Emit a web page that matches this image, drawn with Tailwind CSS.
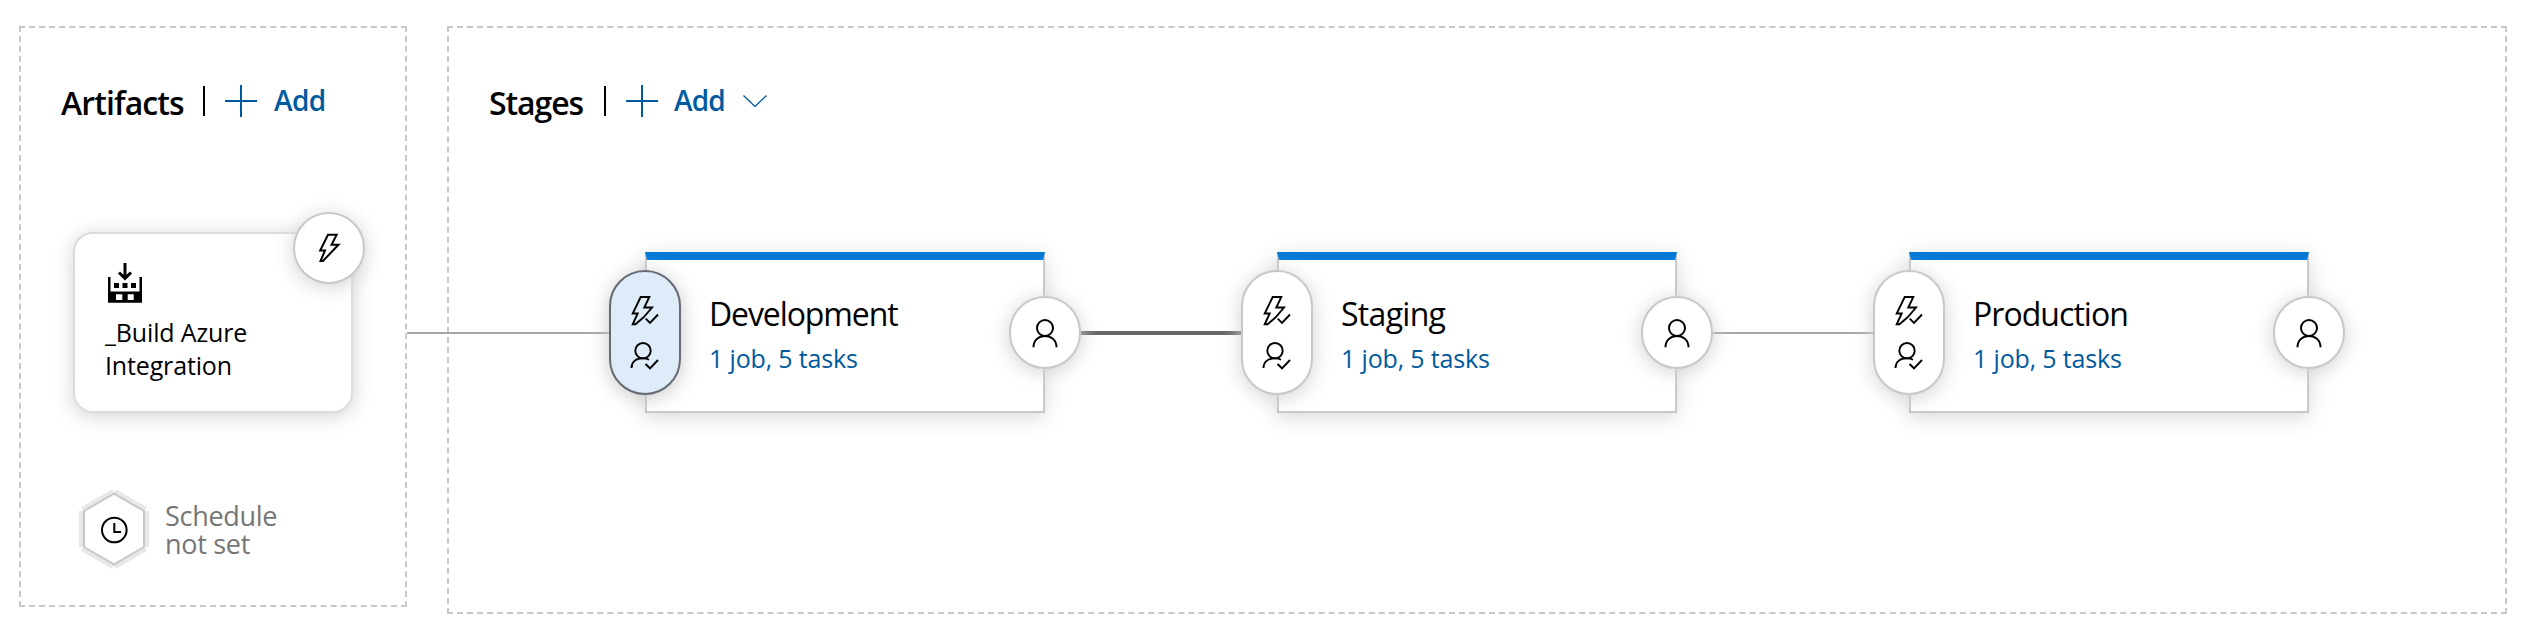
<!DOCTYPE html>
<html lang="en">
<head>
<meta charset="utf-8">
<title>Release pipeline</title>
<script src="https://cdn.jsdelivr.net/npm/@tailwindcss/browser@4"></script>
</head>
<body class="bg-white text-black font-['Open_Sans','Noto_Sans',sans-serif]">
<svg class="hidden">
  <symbol id="plus" viewBox="0 0 32 32"><path d="M0 16H32M16 0V32" fill="none" stroke="currentColor" stroke-width="2"/></symbol>
  <symbol id="person" viewBox="0 0 72 73"><g fill="none" stroke="#000" stroke-width="2"><circle cx="36" cy="32" r="8"/><path d="M24.5 51.3C24.5 44.5 29.2 40 36 40S47.500 44.500 47.500 51.300"/></g></symbol>
  <symbol id="gates" viewBox="0 0 72 125"><g fill="none" stroke="#000" stroke-width="1.9"><path d="M35.500 46.500L26.500 54.300H23.700L28.700 43.500H23.700L31.700 27H40.300L35.300 37.500H43L34.500 47.500"/><path d="M36.700 48.700L41 53L49 44.500"/><circle cx="34" cy="80.700" r="7.700"/><path d="M22.500 98C22.500 92 27 88.300 34 88.300C36.500 88.300 38.500 88.900 40 89.800"/><path d="M36.500 94L41 98.300L49 90"/></g></symbol>
</svg>
<main class="relative flex items-start gap-10 pl-[19px] pt-[26px] w-[2530px] h-[634px] overflow-hidden">
  <section class="w-[388px] h-[581px] shrink-0 border-2 border-dashed border-[#c8c8c8] pl-[40px] pt-[55px]">
    <header class="flex items-center h-[36px]">
      <h2 class="w-[142px] text-[32px] leading-[36px] pt-[3px] font-semibold tracking-[-0.9px] whitespace-nowrap">Artifacts</h2>
      <span class="w-[2px] h-[30px] bg-black"></span>
      <span class="flex items-center text-[#005a9e] ml-[20px]">
        <svg class="w-8 h-8"><use href="#plus"/></svg>
        <span class="ml-[17px] -mt-[2px] text-[28px] leading-[36px] font-semibold tracking-[-0.6px]">Add</span>
      </span>
    </header>
    <div class="relative mt-[113px] ml-[12px] w-[280px] h-[181px] rounded-[20px] border-2 border-[#dcdcdc] bg-white shadow-[0_3px_20px_#d2d2d2] pl-[30px] pt-[29px]">
      <svg class="w-[38px] h-[40px]" viewBox="0 0 38 40">
        <path d="M20 0V15M14 9.500L20 15.300L26 9.500" fill="none" stroke="#000" stroke-width="3"/>
        <path fill-rule="evenodd" d="M3 14H5.500V28.500H34.500V14H37V39.700H3ZM11 31.300V37H17.300V31.300ZM22.700 31.300V37H28.700V31.300ZM9 20H14V25H9ZM17.500 20H22.500V25H17.500ZM26 20H31V25H26Z"/>
      </svg>
      <p class="mt-[13px] text-[25px] leading-[33px] tracking-[-0.15px] whitespace-nowrap">_Build Azure<br>Integration</p>
      <div class="absolute left-[218px] top-[-22px] size-[72px] rounded-full border-2 border-[#c8c8c8] bg-white shadow-[0_3px_20px_#d2d2d2]">
        <svg class="absolute -left-[2px] -top-[2px] size-[72px]" viewBox="0 0 72 72"><path d="M35 22.700H43.700L38.500 32.700H45.500L30 49H27.500L32 38.500H27.200Z" fill="none" stroke="#000" stroke-width="2"/></svg>
      </div>
    </div>
    <div class="flex items-start mt-[76px] ml-[17px]">
      <svg class="w-[72px] h-[80px]" viewBox="0 0 72 80">
        <g fill="none" stroke="#e8e8e8" stroke-width="4"><path d="M3 22V58M69 22V58M4 20L35 2M68 20L37 2M4 60L35 78M68 60L37 78"/></g>
        <path d="M6 22L36 4.700L66 22V58L36 75.300L6 58Z" fill="#fff" stroke="#c8c8c8" stroke-width="2"/>
        <g fill="none" stroke="#000" stroke-width="2"><circle cx="36.300" cy="41" r="12.300"/><path d="M36.300 34V43H43"/></g>
      </svg>
      <p class="ml-[15px] mt-[13px] text-[27px] leading-[28px] tracking-[-0.3px] text-[#767676]">Schedule<br>not set</p>
    </div>
  </section>

  <section class="w-[2060px] h-[588px] shrink-0 border-2 border-dashed border-[#c8c8c8] pl-[40px] pt-[55px]">
    <header class="flex items-center h-[36px]">
      <h2 class="w-[115px] text-[32px] leading-[36px] pt-[3px] font-semibold tracking-[-1.1px] whitespace-nowrap">Stages</h2>
      <span class="w-[2px] h-[30px] bg-black"></span>
      <span class="flex items-center text-[#005a9e] ml-[20px]">
        <svg class="w-8 h-8"><use href="#plus"/></svg>
        <span class="ml-4 -mt-[2px] text-[28px] leading-[36px] font-semibold tracking-[-0.8px]">Add</span>
        <svg class="ml-[18px] w-6 h-3" viewBox="0 0 24 12"><path d="M.500 .500L12 11.500L23.500 .500" fill="none" stroke="currentColor" stroke-width="1.300"/></svg>
      </span>
    </header>
    <div class="flex items-center mt-[133px] -ml-[82px]">
      <div class="w-[238px] h-[2px] mt-[1px] bg-[#a6a6a6]"></div>
      <article class="relative w-[400px] h-[161px] border-2 border-t-8 border-[#c8c8c8] border-t-[#0078d7] bg-white shadow-[0_4px_20px_#d8d8d8] pl-[62px] pt-[32px]">
        <h3 class="text-[32px] leading-[44px] tracking-[-1.1px]">Development</h3>
        <p class="text-[25px] leading-[44px] tracking-[-0.15px] text-[#005a9e]">1 job, 5 tasks</p>
        <div class="absolute -left-[38px] top-[10px] w-[72px] h-[125px] rounded-full border-2 border-[#666a73] bg-[#deecf9] shadow-[0_3px_20px_#c8c8c8]"><svg class="absolute -left-[2px] -top-[2px] w-[72px] h-[125px]"><use href="#gates"/></svg></div>
        <div class="absolute left-[362px] top-[36px] w-[72px] h-[73px] rounded-full border-2 border-[#c8c8c8] bg-white shadow-[0_3px_20px_#d2d2d2]"><svg class="absolute -left-[2px] -top-[2px] w-[72px] h-[73px]"><use href="#person"/></svg></div>
      </article>
      <div class="w-[232px] h-[4px] mt-[1px] bg-[#666]"></div>
      <article class="relative w-[400px] h-[161px] border-2 border-t-8 border-[#c8c8c8] border-t-[#0078d7] bg-white shadow-[0_4px_20px_#d8d8d8] pl-[62px] pt-[32px]">
        <h3 class="text-[32px] leading-[44px] tracking-[-0.7px]">Staging</h3>
        <p class="text-[25px] leading-[44px] tracking-[-0.15px] text-[#005a9e]">1 job, 5 tasks</p>
        <div class="absolute -left-[38px] top-[10px] w-[72px] h-[125px] rounded-full border-2 border-[#c8c8c8] bg-white shadow-[0_3px_20px_#d2d2d2]"><svg class="absolute -left-[2px] -top-[2px] w-[72px] h-[125px]"><use href="#gates"/></svg></div>
        <div class="absolute left-[362px] top-[36px] w-[72px] h-[73px] rounded-full border-2 border-[#c8c8c8] bg-white shadow-[0_3px_20px_#d2d2d2]"><svg class="absolute -left-[2px] -top-[2px] w-[72px] h-[73px]"><use href="#person"/></svg></div>
      </article>
      <div class="w-[232px] h-[2px] mt-[1px] bg-[#a6a6a6]"></div>
      <article class="relative w-[400px] h-[161px] border-2 border-t-8 border-[#c8c8c8] border-t-[#0078d7] bg-white shadow-[0_4px_20px_#d8d8d8] pl-[62px] pt-[32px]">
        <h3 class="text-[32px] leading-[44px] tracking-[-0.95px]">Production</h3>
        <p class="text-[25px] leading-[44px] tracking-[-0.15px] text-[#005a9e]">1 job, 5 tasks</p>
        <div class="absolute -left-[38px] top-[10px] w-[72px] h-[125px] rounded-full border-2 border-[#c8c8c8] bg-white shadow-[0_3px_20px_#d2d2d2]"><svg class="absolute -left-[2px] -top-[2px] w-[72px] h-[125px]"><use href="#gates"/></svg></div>
        <div class="absolute left-[362px] top-[36px] w-[72px] h-[73px] rounded-full border-2 border-[#c8c8c8] bg-white shadow-[0_3px_20px_#d2d2d2]"><svg class="absolute -left-[2px] -top-[2px] w-[72px] h-[73px]"><use href="#person"/></svg></div>
      </article>
    </div>
  </section>
</main>
</body>
</html>
